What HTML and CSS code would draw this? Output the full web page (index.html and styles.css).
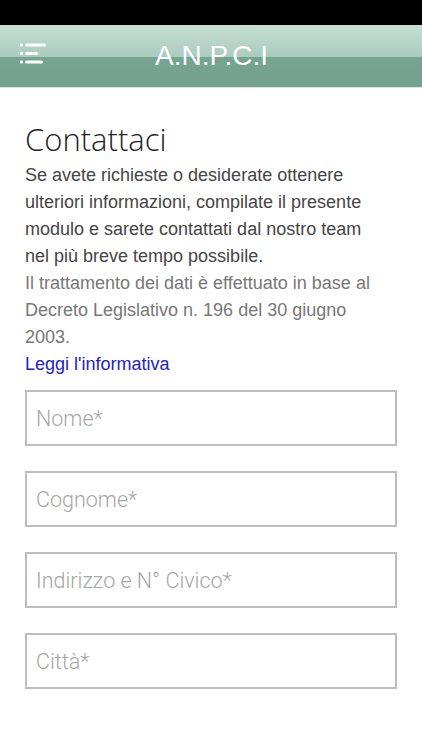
FILE: index.html
```html
<!DOCTYPE html>
<html lang="it">
<head>
<meta charset="utf-8">
<title>A.N.P.C.I</title>
<link rel="stylesheet" href="styles.css">
</head>
<body>
<div class="statusbar"></div>
<header class="navbar">
  <div class="menu-btn">
    <svg width="28" height="24" viewBox="0 0 28 24">
      <g fill="#ffffff">
        <rect x="0" y="3.5" width="3" height="3" rx="1"/>
        <rect x="5" y="3.5" width="21" height="3" rx="1.5"/>
        <rect x="0" y="12" width="3" height="3" rx="1"/>
        <rect x="5" y="12" width="13" height="3" rx="1.5"/>
        <rect x="0" y="20.5" width="3" height="3" rx="1"/>
        <rect x="5" y="20.5" width="18" height="3" rx="1.5"/>
      </g>
    </svg>
  </div>
  <h1 class="brand">A.N.P.C.I</h1>
</header>
<main class="content">
  <h2 class="title">Contattaci</h2>
  <p class="intro">Se avete richieste o desiderate ottenere ulteriori informazioni, compilate il presente modulo e sarete contattati dal nostro team nel più breve tempo possibile.</p>
  <p class="privacy">Il trattamento dei dati è effettuato in base al Decreto Legislativo n. 196 del 30 giugno 2003.</p>
  <a class="link" href="#">Leggi l'informativa</a>
  <form class="form">
    <input class="field" type="text" placeholder="Nome*">
    <input class="field" type="text" placeholder="Cognome*">
    <input class="field" type="text" placeholder="Indirizzo e N° Civico*">
    <input class="field" type="text" placeholder="Città*">
  </form>
</main>
</body>
</html>
```

FILE: styles.css
```css
html, body {
  margin: 0;
  padding: 0;
  background: #ffffff;
}
body {
  width: 422px;
  font-family: "Liberation Sans", Arial, sans-serif;
}
.statusbar {
  height: 25px;
  background: #000000;
}
.navbar {
  position: relative;
  height: 62px;
  background: linear-gradient(to bottom, #c6ded4 0%, #a9cbbd 52%, #76a491 52%, #73a18e 100%);
  border-bottom: 1px solid #d8e8e2;
  display: flex;
  align-items: center;
  justify-content: center;
}
.menu-btn {
  position: absolute;
  left: 20px;
  top: 15px;
  width: 28px;
  height: 24px;
  display: flex;
}
.brand {
  margin: 0;
  font-family: "Liberation Sans", Arial, sans-serif;
  font-weight: 400;
  font-size: 28px;
  color: #ffffff;
  line-height: 1;
  padding-top: 0;
  padding-left: 1px;
}
.content {
  padding: 0 25px;
}
.title {
  margin: 32px 0 4px 0;
  font-family: "Open Sans", sans-serif;
  font-weight: 300;
  font-size: 31px;
  line-height: 38px;
  color: #222222;
}
.intro, .privacy {
  margin: 0;
  max-width: 362px;
  font-size: 18px;
  line-height: 27px;
}
.intro {
  color: #454545;
}
.privacy {
  color: #777777;
}
.link {
  display: block;
  font-size: 18px;
  line-height: 27px;
  color: #2323c4;
  text-decoration: none;
}
.form {
  margin-top: 12px;
  display: flex;
  flex-direction: column;
  gap: 25px;
}
.field {
  box-sizing: border-box;
  width: 372px;
  height: 56px;
  margin: 0;
  border: 2px solid #bdbdbd;
  border-radius: 0;
  padding: 0 9px;
  font-family: Roboto, "Liberation Sans", sans-serif;
  font-weight: 300;
  font-size: 21.5px;
  color: #555;
  background: #fff;
  outline: none;
}
.field::placeholder {
  color: #a6a6a6;
  opacity: 1;
}
```
